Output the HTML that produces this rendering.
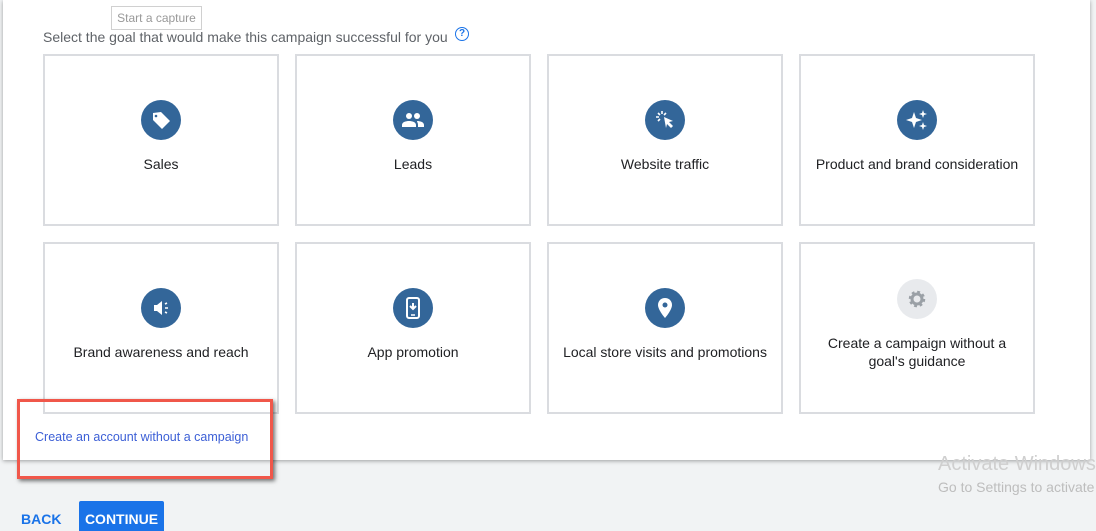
<!DOCTYPE html>
<html><head><style>
*{box-sizing:border-box;margin:0;padding:0}
html,body{width:1096px;height:531px;overflow:hidden}
body{background:#f1f3f4;font-family:"Liberation Sans",Arial,sans-serif;position:relative}
.panel{position:absolute;left:3px;top:0;width:1087px;height:460px;background:#fff;box-shadow:0 1px 4px rgba(0,0,0,.35)}
.tip{position:absolute;left:111px;top:6px;width:91px;height:24px;border:1px solid #d0d0d0;color:#999;font-size:12px;line-height:22px;text-align:center;background:#fff}
.title{position:absolute;left:43px;top:29px;font-size:14px;color:#5f6368}
.q{position:absolute;left:455px;top:27px;width:14px;height:14px;border:1.5px solid #1a73e8;border-radius:50%;color:#1a73e8;font-size:10px;font-weight:bold;text-align:center;line-height:11px}
.card{position:absolute;width:236px;height:172px;border:2px solid #dadce0;background:#fff;text-align:center;font-size:14px;color:#202124}
.ic{position:absolute;left:96px;top:44px;width:40px;height:40px;border-radius:50%;background:#336699}
.ic svg{width:40px;height:40px}
.lbl{position:absolute;left:0;right:0;top:99px;line-height:18px}
.link{position:absolute;left:35px;top:430px;font-size:12.5px;color:#3c5fd6}
.red{position:absolute;left:17px;top:399px;width:256px;height:80px;border:3px solid #f0574a;box-shadow:2px 2px 4px rgba(0,0,0,.55)}
.back{position:absolute;left:21px;top:511px;font-size:14px;font-weight:bold;color:#1a73e8}
.cont{position:absolute;left:79px;top:501px;width:85px;height:30px;background:#1a73e8;color:#fff;font-size:14px;font-weight:bold;text-align:center;line-height:36px;border-radius:2px 2px 0 0}
.wm{position:absolute;left:938px;top:450px;width:158px;height:50px;overflow:hidden}
.wm1{font-size:20px;color:#cfcfcf;white-space:nowrap;line-height:28px}
.wm2{font-size:14px;color:#bdbdbd;white-space:nowrap;line-height:18px}
</style></head><body>
<div class="panel"></div>
<div class="title">Select the goal that would make this campaign successful for you</div>
<div class="q">?</div>
<div class="tip">Start a capture</div>

<div class="card" style="left:43px;top:54px"><div class="ic"><svg viewBox="0 0 40 40"><path d="M12 13v7l9 9 8-8-9-9z" fill="#fff"/><circle cx="15" cy="16" r="1.3" fill="#336699"/></svg></div><div class="lbl">Sales</div></div>
<div class="card" style="left:295px;top:54px"><div class="ic"><svg viewBox="0 0 40 40"><circle cx="16" cy="16" r="3" fill="#fff"/><circle cx="24" cy="16" r="3" fill="#fff"/><path d="M9 27v-2c0-3 4-4 7-4s7 1 7 4v2zM24 21c3 0 7 1 7 4v2h-6v-2c0-2-1-3-1-4z" fill="#fff"/></svg></div><div class="lbl">Leads</div></div>
<div class="card" style="left:547px;top:54px"><div class="ic"><svg viewBox="0 0 40 40"><path d="M19 17l9 4-4 1 4 4-2 2-4-4-1 4z" fill="#fff"/><path d="M17 11v3M11 17h3M13 13l2 2M21 13l-2 2M13 21l2-2" stroke="#fff" stroke-width="1.6"/></svg></div><div class="lbl">Website traffic</div></div>
<div class="card" style="left:799px;top:54px"><div class="ic"><svg viewBox="0 0 40 40"><path d="M17 12l2 6 6 2-6 2-2 6-2-6-6-2 6-2z" fill="#fff"/><path d="M26 10l1 3 3 1-3 1-1 3-1-3-3-1 3-1zM26 22l1 3 3 1-3 1-1 3-1-3-3-1 3-1z" fill="#fff"/></svg></div><div class="lbl">Product and brand consideration</div></div>

<div class="card" style="left:43px;top:242px"><div class="ic"><svg viewBox="0 0 40 40"><path d="M13 17h3l5-4v14l-5-4h-3z" fill="#fff"/><path d="M24 16l2-1M24 20h3M24 24l2 1" stroke="#fff" stroke-width="1.6"/></svg></div><div class="lbl">Brand awareness and reach</div></div>
<div class="card" style="left:295px;top:242px"><div class="ic"><svg viewBox="0 0 40 40"><rect x="14" y="10" width="12" height="20" rx="2" fill="none" stroke="#fff" stroke-width="2"/><path d="M20 15v5M17 18l3 3 3-3" stroke="#fff" stroke-width="2" fill="none"/><path d="M18 27h4" stroke="#fff" stroke-width="1.5"/></svg></div><div class="lbl">App promotion</div></div>
<div class="card" style="left:547px;top:242px"><div class="ic"><svg viewBox="0 0 40 40"><path d="M20 10c-4 0-7 3-7 7 0 5 7 13 7 13s7-8 7-13c0-4-3-7-7-7z" fill="#fff"/><circle cx="20" cy="17" r="2.5" fill="#336699"/></svg></div><div class="lbl">Local store visits and promotions</div></div>
<div class="card" style="left:799px;top:242px"><div class="ic" style="top:35px;background:#e8eaed"><svg viewBox="0 0 40 40"><circle cx="20" cy="20" r="6.5" fill="none" stroke="#9aa0a6" stroke-width="3.5" stroke-dasharray="2.6 2.5"/><circle cx="20" cy="20" r="5" fill="none" stroke="#9aa0a6" stroke-width="3"/></svg></div><div class="lbl" style="top:90px">Create a campaign without a<br>goal's guidance</div></div>

<div class="link">Create an account without a campaign</div>
<div class="red"></div>
<div class="wm"><div class="wm1">Activate Windows</div><div class="wm2">Go to Settings to activate Windows.</div></div>
<div class="back">BACK</div>
<div class="cont">CONTINUE</div>
</body></html>
